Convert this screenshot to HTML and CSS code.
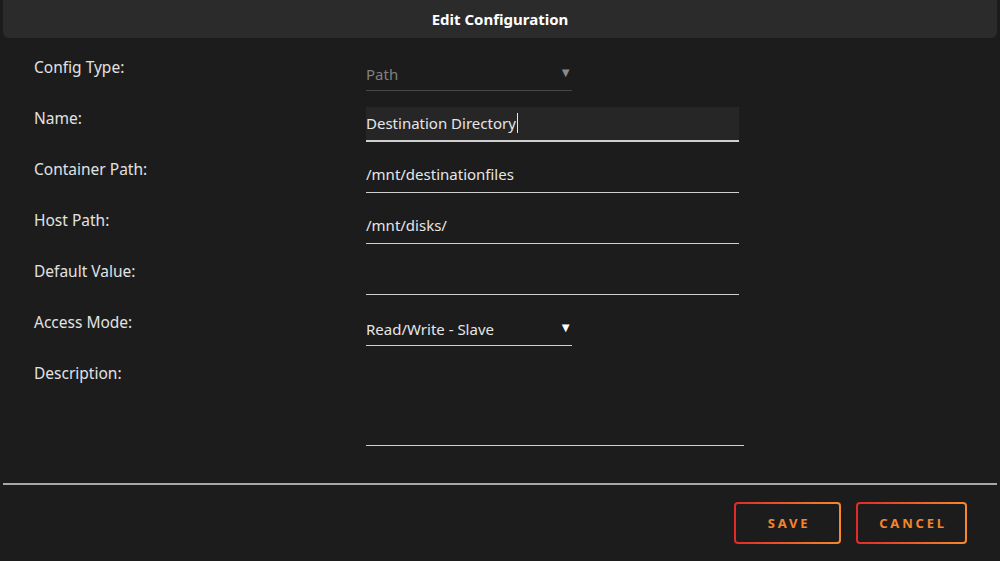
FILE: index.html
```html
<!DOCTYPE html>
<html lang="en">
<head>
<meta charset="utf-8">
<title>Edit Configuration</title>
<link rel="stylesheet" href="styles.css">
</head>
<body>
<div class="dialog">
  <div class="header">Edit Configuration</div>
  <div class="form">
    <div class="row">
      <div class="label">Config Type:</div>
      <div class="field select disabled"><span class="value">Path</span><span class="arrow">▼</span></div>
    </div>
    <div class="row">
      <div class="label">Name:</div>
      <div class="field input focused"><span class="value">Destination Directory</span><span class="caret"></span></div>
    </div>
    <div class="row">
      <div class="label">Container Path:</div>
      <div class="field input"><span class="value">/mnt/destinationfiles</span></div>
    </div>
    <div class="row">
      <div class="label">Host Path:</div>
      <div class="field input"><span class="value">/mnt/disks/</span></div>
    </div>
    <div class="row">
      <div class="label">Default Value:</div>
      <div class="field input"><span class="value"></span></div>
    </div>
    <div class="row">
      <div class="label">Access Mode:</div>
      <div class="field select"><span class="value">Read/Write - Slave</span><span class="arrow">▼</span></div>
    </div>
    <div class="row">
      <div class="label">Description:</div>
      <div class="field textarea"></div>
    </div>
  </div>
  <div class="divider"></div>
  <div class="actions">
    <button class="btn save">SAVE</button>
    <button class="btn cancel">CANCEL</button>
  </div>
</div>
</body>
</html>
```
FILE: styles.css
```css
html, body {
  margin: 0;
  padding: 0;
  background: #1c1c1c;
  height: 100%;
}
body {
  font-family: "Noto Sans", "Open Sans", sans-serif;
  color: #e4e4e4;
}
.header {
  margin: 0 3px;
  height: 38px;
  background: #2b2b2b;
  border-radius: 0 0 6px 6px;
  display: flex;
  align-items: center;
  justify-content: center;
  font-size: 15px;
  font-weight: 700;
  color: #ffffff;
}
.form {
  padding: 18px 0 0 34px;
  display: flex;
  flex-direction: column;
  gap: 16px;
}
.row {
  display: flex;
  align-items: flex-start;
}
.label {
  width: 332px;
  font-size: 15.5px;
  line-height: 22px;
  color: #e2e2e2;
}
.field {
  height: 34px;
  border-bottom: 1px solid #d0d0d0;
  display: flex;
  align-items: center;
  font-size: 15px;
  line-height: 20px;
  color: #e6e6e6;
  box-sizing: content-box;
}
.input .value {
  position: relative;
  top: -1px;
}
.select .value {
  position: relative;
  top: 1px;
}
.input {
  width: 373px;
}
.input.focused {
  background: #262626;
  border-bottom-width: 2px;
  height: 33px;
}
.select {
  width: 206px;
  justify-content: space-between;
}
.select .arrow {
  font-size: 13px;
  margin-right: 0;
  color: #ffffff;
  position: relative;
  top: -1px;
}
.select.disabled {
  border-bottom-color: #474747;
  color: #808080;
}
.select.disabled .arrow {
  color: #8a8a8a;
}
.caret {
  display: inline-block;
  width: 1px;
  height: 20px;
  background: #e6e6e6;
  margin-left: 1px;
  position: relative;
  top: -1px;
}
.textarea {
  width: 378px;
  height: 83px;
}
.divider {
  margin: 37px 3px 0;
  height: 2px;
  background: #a8a8a8;
}
.actions {
  display: flex;
  justify-content: flex-end;
  gap: 15px;
  padding: 17px 33px 0 0;
}
.btn {
  height: 42px;
  border: 2px solid transparent;
  border-radius: 4px;
  background: linear-gradient(#1c1c1c, #1c1c1c) padding-box,
              linear-gradient(90deg, #e22a28, #f7892b) border-box;
  color: #f5852c;
  font-family: "Noto Sans", "Open Sans", sans-serif;
  font-weight: 700;
  font-size: 13px;
  letter-spacing: 2.8px;
  padding: 0 0 0 3px;
  cursor: pointer;
}
.save { width: 107px; }
.cancel { width: 111px; }
```
